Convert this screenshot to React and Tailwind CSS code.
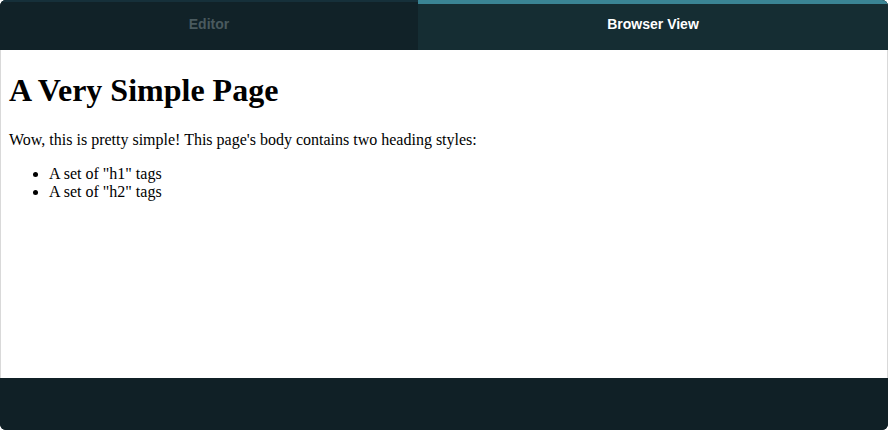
const App = () => {
  return (
    <div className="w-[888px] h-[430px] bg-white">
      <div className="flex flex-col h-full rounded-[6px] overflow-hidden bg-[#102026]">
        <div className="flex h-[50px] font-['Liberation_Sans',Arial,sans-serif] text-[14px] font-bold">
          <div className="w-[418px] flex flex-col bg-[#112228]">
            <div className="h-[2px] bg-[#16303a]" />
            <div className="flex-1 flex items-center justify-center text-[#4a5a5f] pb-[4px]">
              Editor
            </div>
          </div>
          <div className="flex-1 flex flex-col bg-[#152d33]">
            <div className="h-[4px] bg-[#3a8494]" />
            <div className="flex-1 flex items-center justify-center text-white pb-[6px]">
              Browser View
            </div>
          </div>
        </div>
        <div className="h-[328px] bg-white border-x border-[#d9d9d9] px-2 py-px font-['Liberation_Serif','Times_New_Roman',serif] text-black text-[16px] leading-[18px]">
          <h1 className="text-[32px] font-bold leading-[37px] mt-[21px] mb-[22px]">
            A Very Simple Page
          </h1>
          <p className="my-4">
            Wow, this is pretty simple! This page's body contains two heading styles:
          </p>
          <ul className="list-disc pl-10 my-4">
            <li>A set of "h1" tags</li>
            <li>A set of "h2" tags</li>
          </ul>
        </div>
        <div className="flex-1 bg-[#102026]" />
      </div>
    </div>
  );
};

export default App;
